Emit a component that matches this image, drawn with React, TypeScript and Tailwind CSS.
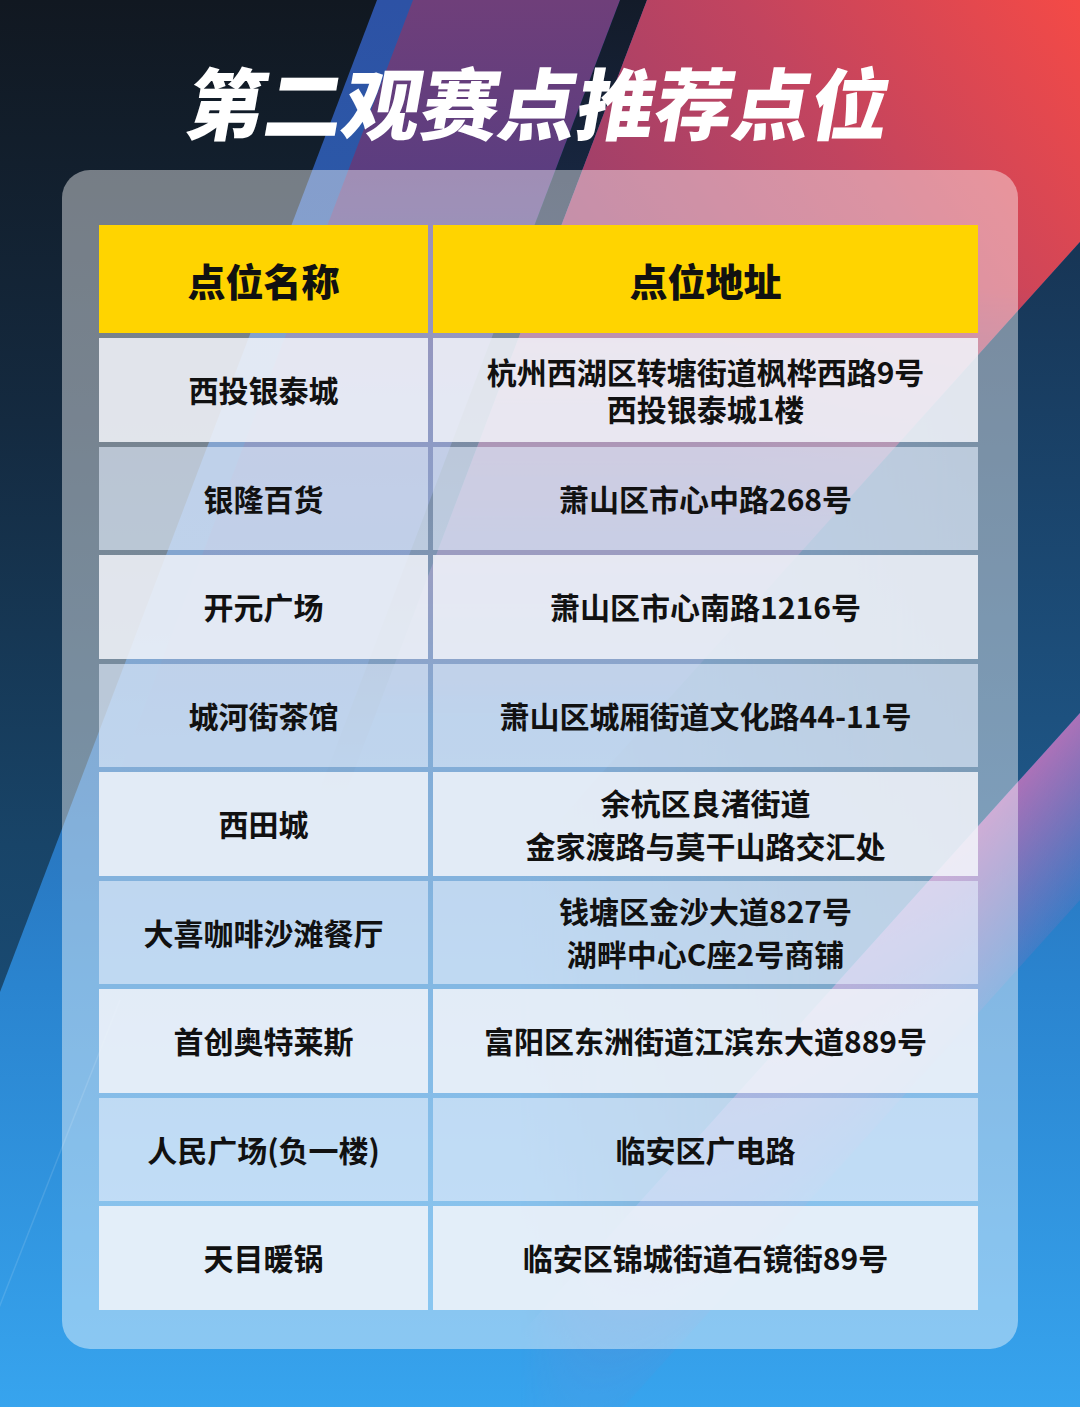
import React from "react";

type Spot = { name: string; addr: string[]; leading?: string };

const spots: Spot[] = [
  { name: "西投银泰城", addr: ["杭州西湖区转塘街道枫桦西路9号", "西投银泰城1楼"], leading: "leading-[37px]" },
  { name: "银隆百货", addr: ["萧山区市心中路268号"] },
  { name: "开元广场", addr: ["萧山区市心南路1216号"] },
  { name: "城河街茶馆", addr: ["萧山区城厢街道文化路44-11号"] },
  { name: "西田城", addr: ["余杭区良渚街道", "金家渡路与莫干山路交汇处"] },
  { name: "大喜咖啡沙滩餐厅", addr: ["钱塘区金沙大道827号", "湖畔中心C座2号商铺"] },
  { name: "首创奥特莱斯", addr: ["富阳区东洲街道江滨东大道889号"] },
  { name: "人民广场(负一楼)", addr: ["临安区广电路"] },
  { name: "天目暖锅", addr: ["临安区锦城街道石镜街89号"] },
];

// diagonal stripes behind everything
function Backdrop() {
  const k = 0.38;
  const sx = (x0: number, y: number) => x0 - k * y;
  const pts = (p: number[][]) => p.map((q) => q.join(",")).join(" ");

  return (
    <svg className="absolute inset-0" width="1080" height="1407" viewBox="0 0 1080 1407">
      <defs>
        <linearGradient id="navy" gradientUnits="userSpaceOnUse" x1="0" y1="0" x2="0" y2="1407">
          <stop offset="0" stopColor="#111821" />
          <stop offset="0.3" stopColor="#142a40" />
          <stop offset="0.6" stopColor="#184468" />
          <stop offset="1" stopColor="#1d5a8c" />
        </linearGradient>
        <linearGradient id="blue" gradientUnits="userSpaceOnUse" x1="0" y1="0" x2="0" y2="1407">
          <stop offset="0" stopColor="#2d52a5" />
          <stop offset="0.45" stopColor="#2866ad" />
          <stop offset="0.7" stopColor="#2a84cf" />
          <stop offset="1" stopColor="#37a4ee" />
        </linearGradient>
        <linearGradient id="purple" gradientUnits="userSpaceOnUse" x1="0" y1="0" x2="0" y2="800">
          <stop offset="0" stopColor="#6f3f7a" />
          <stop offset="0.22" stopColor="#5b3d80" />
          <stop offset="0.6" stopColor="#4a4a90" stopOpacity="0.5" />
          <stop offset="1" stopColor="#3a5aa0" stopOpacity="0" />
        </linearGradient>
        <linearGradient id="slit" gradientUnits="userSpaceOnUse" x1="0" y1="0" x2="0" y2="800">
          <stop offset="0" stopColor="#131b29" />
          <stop offset="0.5" stopColor="#152238" stopOpacity="0.7" />
          <stop offset="1" stopColor="#152238" stopOpacity="0" />
        </linearGradient>
        <linearGradient id="red" gradientUnits="userSpaceOnUse" x1="1080" y1="0" x2="620" y2="320">
          <stop offset="0" stopColor="#f44a46" />
          <stop offset="0.5" stopColor="#c2445f" />
          <stop offset="1" stopColor="#9a3f6c" />
        </linearGradient>
        <linearGradient id="fadeDown" gradientUnits="userSpaceOnUse" x1="0" y1="0" x2="0" y2="720">
          <stop offset="0" stopColor="#fff" />
          <stop offset="0.4" stopColor="#fff" />
          <stop offset="1" stopColor="#000" />
        </linearGradient>
        <mask id="redMask">
          <rect width="1080" height="1407" fill="url(#fadeDown)" />
        </mask>
        <linearGradient id="fadeLeft" gradientUnits="userSpaceOnUse" x1="1080" y1="0" x2="520" y2="0">
          <stop offset="0" stopColor="#fff" />
          <stop offset="0.2" stopColor="#fff" />
          <stop offset="1" stopColor="#000" />
        </linearGradient>
        <mask id="sideMask">
          <rect width="1080" height="1407" fill="url(#fadeLeft)" />
        </mask>
        <linearGradient id="wedge" gradientUnits="userSpaceOnUse" x1="0" y1="242" x2="0" y2="957">
          <stop offset="0" stopColor="#173555" />
          <stop offset="1" stopColor="#205f94" />
        </linearGradient>
        <linearGradient id="glow" gradientUnits="userSpaceOnUse" x1="1080" y1="713" x2="1191" y2="813">
          <stop offset="0" stopColor="#b272b8" stopOpacity="0.95" />
          <stop offset="1" stopColor="#b272b8" stopOpacity="0" />
        </linearGradient>
      </defs>

      <rect width="1080" height="1407" fill="url(#navy)" />
      <polygon points={pts([[377, 0], [1080, 0], [1080, 1407], [sx(377, 1407), 1407]])} fill="url(#blue)" />
      <polygon points={pts([[413, 0], [620, 0], [sx(620, 800), 800], [sx(413, 800), 800]])} fill="url(#purple)" />
      <polygon points={pts([[620, 0], [647, 0], [sx(647, 800), 800], [sx(620, 800), 800]])} fill="url(#slit)" />
      <polygon
        points={pts([[647, 0], [1080, 0], [1080, 242], [488, 900], [sx(647, 900), 900]])}
        fill="url(#red)"
        mask="url(#redMask)"
      />
      <g mask="url(#sideMask)">
        <polygon points={pts([[1080, 242], [1080, 713], [520, 1335], [520, 864]])} fill="url(#wedge)" />
        <polygon points={pts([[1080, 713], [1080, 900], [520, 1522], [520, 1335]])} fill="url(#glow)" />
      </g>
      <line x1="120" y1="1000" x2="-40" y2="1407" stroke="#ffffff" strokeOpacity="0.12" strokeWidth="1.5" />
    </svg>
  );
}

function Row({ spot, odd }: { spot: Spot; odd: boolean }) {
  const bg = odd ? "bg-[#f2f5fa]/[0.86]" : "bg-[#e4eefc]/[0.62]";
  return (
    <div className="grid grid-cols-[329px_545px] gap-x-[5px] h-[103.5px]">
      <div className={`${bg} flex items-center justify-center text-[30px] font-bold text-[#111]`}>
        {spot.name}
      </div>
      <div
        className={`${bg} flex flex-col items-center justify-center text-[30px] font-bold text-[#111] ${
          spot.leading ?? "leading-[43px]"
        }`}
      >
        {spot.addr.map((line) => (
          <span key={line}>{line}</span>
        ))}
      </div>
    </div>
  );
}

export default function App() {
  return (
    <div className="relative w-[1080px] h-[1407px] overflow-hidden bg-[#121922] font-['Noto_Sans_CJK_SC','Noto_Sans',sans-serif]">
      <Backdrop />

      <div className="relative flex flex-col items-center">
        <h1 className="mt-[61px] h-[78px] text-[78px] leading-[78px] font-black text-white -skew-x-[10deg]">
          第二观赛点推荐点位
        </h1>

        <div className="mt-[31px] w-[956px] rounded-[28px] bg-white/[0.42] pt-[55px] pb-[39px] pl-[37px] pr-[40px]">
          <div className="flex flex-col gap-[5px]">
            <div className="grid grid-cols-[329px_545px] gap-x-[5px] h-[108px]">
              <div className="bg-[#ffd400] flex items-center justify-center text-[38px] font-black text-[#111]">
                点位名称
              </div>
              <div className="bg-[#ffd400] flex items-center justify-center text-[38px] font-black text-[#111]">
                点位地址
              </div>
            </div>
            {spots.map((s, i) => (
              <Row key={s.name} spot={s} odd={i % 2 === 0} />
            ))}
          </div>
        </div>
      </div>
    </div>
  );
}
